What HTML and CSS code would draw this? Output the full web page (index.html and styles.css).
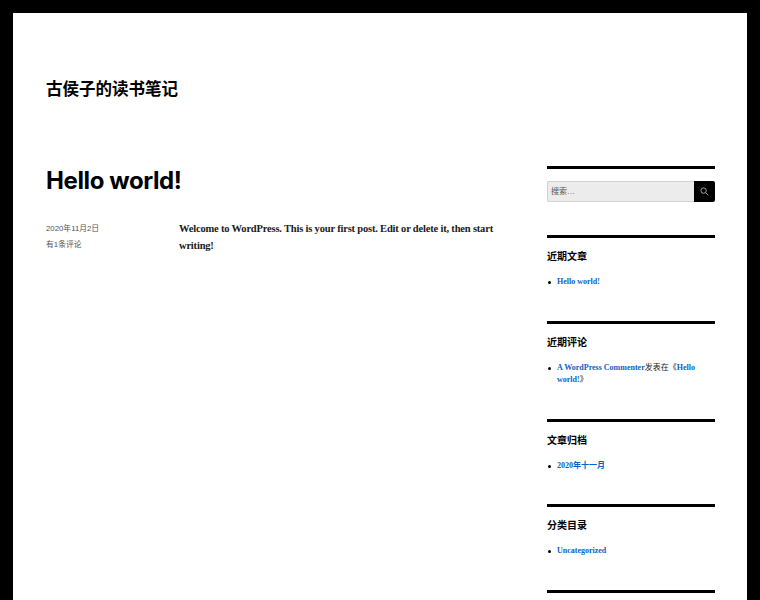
FILE: index.html
```html
<!DOCTYPE html>
<html lang="zh">
<head>
<meta charset="utf-8">
<title>古侯子的读书笔记</title>
<link rel="stylesheet" href="styles.css">
</head>
<body>
<div class="page">
  <header class="site-header"><a class="site-title" href="#">古侯子的读书笔记</a></header>
  <div class="columns">
    <main class="main">
      <h1 class="entry-title">Hello world!</h1>
      <div class="entry">
        <div class="meta">
          <div class="meta-line">2020年11月2日</div>
          <div class="meta-line">有1条评论</div>
        </div>
        <p class="content">Welcome to WordPress. This is your first post. Edit or delete it, then start writing!</p>
      </div>
    </main>
    <aside class="sidebar">
      <section class="widget widget-search">
        <form class="search">
          <span class="search-field">搜索…</span>
          <span class="search-btn">
            <svg width="9" height="9" viewBox="0 0 10 10" fill="none" stroke="#b5b5b5" stroke-width="1"><circle cx="4" cy="4" r="3"/><path d="M6.2 6.2 9.2 9.2"/></svg>
          </span>
        </form>
      </section>
      <section class="widget">
        <h2 class="widget-title">近期文章</h2>
        <ul class="list"><li><a href="#">Hello world!</a></li></ul>
      </section>
      <section class="widget">
        <h2 class="widget-title">近期评论</h2>
        <ul class="list"><li><a href="#">A WordPress Commenter</a>发表在《<a href="#">Hello world!</a>》</li></ul>
      </section>
      <section class="widget">
        <h2 class="widget-title">文章归档</h2>
        <ul class="list"><li><a href="#">2020年十一月</a></li></ul>
      </section>
      <section class="widget">
        <h2 class="widget-title">分类目录</h2>
        <ul class="list"><li><a href="#">Uncategorized</a></li></ul>
      </section>
      <section class="widget"></section>
    </aside>
  </div>
</div>
</body>
</html>
```
FILE: styles.css
```css
html, body { margin: 0; padding: 0; height: 600px; overflow: hidden; }
body { background: #000; padding: 13px 13px 0; box-sizing: border-box; font-family: "Liberation Serif", "Noto Sans CJK SC", serif; color: #1a1a1a; }
.page { background: #fff; height: 587px; overflow: hidden; padding: 0 32px 0 33px; }
a { text-decoration: none; }
.site-header { padding-top: 63px; height: 90px; box-sizing: border-box; }
.site-title { font: 700 16.5px/26px "Liberation Sans", "Noto Sans CJK SC", sans-serif; color: #000; display: block; }
.columns { display: flex; justify-content: space-between; }
.main { width: 449px; }
.entry-title { margin: 0; padding-top: 60px; font: 700 24px/36px Inter, "Liberation Sans", sans-serif; letter-spacing: -0.4px; color: #000; }
.entry { display: flex; margin-top: 22px; }
.meta { width: 133px; flex: none; font: 7.8px/16px "Liberation Sans", "Noto Sans CJK SC", sans-serif; color: #555; }
.content { margin: -1px 0 0; font-size: 10.5px; font-weight: 700; line-height: 17px; letter-spacing: -0.185px; }
.sidebar { width: 168px; padding-top: 63px; }
.widget { border-top: 3px solid #000; padding: 10px 0 32px; }
.widget-search { padding: 12px 0 33px; }
.search { display: flex; height: 21px; }
.search-field { flex: 1; background: #ececec; border: 1px solid #d1d1d1; border-right: 0; border-radius: 2px 0 0 2px; font: 8px/19px "Liberation Sans", "Noto Sans CJK SC", sans-serif; color: #555; padding-left: 3px; }
.search-btn { width: 21px; background: #000; border-radius: 0 2px 2px 0; display: flex; align-items: center; justify-content: center; }
.widget-title { margin: 0 0 12px; font: 700 10px/16px "Noto Sans CJK SC", sans-serif; color: #000; }
.list { margin: 0; padding: 0 0 0 10px; font-size: 8px; line-height: 12.5px; list-style: none; }
.list li { position: relative; }
.list li::before { content: ""; position: absolute; left: -9px; top: 5px; width: 3px; height: 3px; border-radius: 50%; background: #000; }
.list a { color: #0b62c4; font-weight: 700; }
```
